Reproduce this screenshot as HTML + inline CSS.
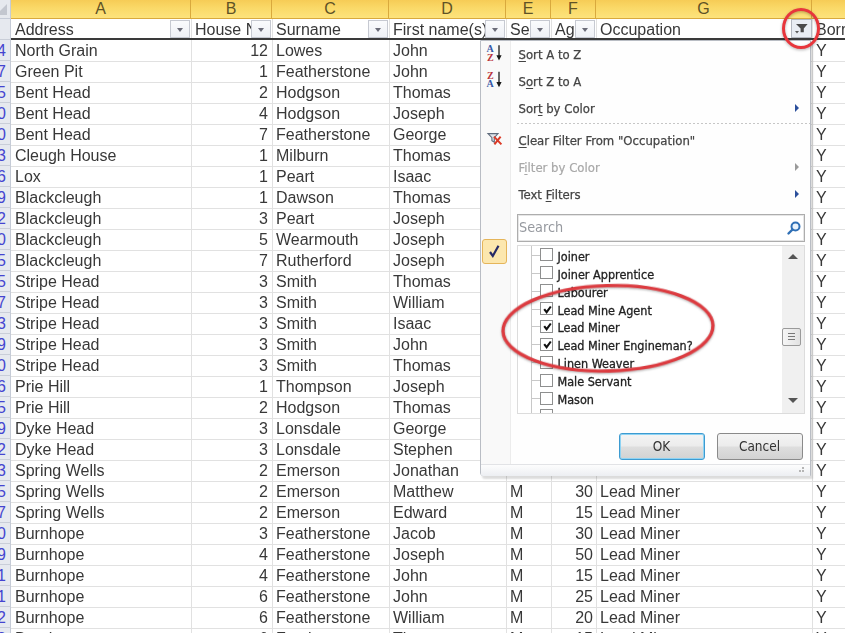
<!DOCTYPE html>
<html><head><meta charset="utf-8"><title>Filter</title>
<style>
html,body{margin:0;padding:0;}
body{width:845px;height:633px;overflow:hidden;position:relative;background:#fff;font-family:"Liberation Sans",sans-serif;font-size:16px;color:#383838;}
.abs{position:absolute;}
#sheet{position:absolute;left:0;top:0;width:845px;height:633px;overflow:hidden;filter:blur(0.45px);}
.colhdr{position:absolute;top:0;height:19px;box-sizing:border-box;border-right:1px solid #d9a93d;border-bottom:1px solid #d9a93d;background:linear-gradient(#f6cc56,#fad968 45%,#fde37c);text-align:center;line-height:17px;font-size:16px;color:#5f5226;}
.corner{position:absolute;left:0;top:0;width:11px;height:19px;box-sizing:border-box;background:#e6e9ee;border-right:1px solid #c5cbd6;border-bottom:1px solid #c5cbd6;overflow:hidden;}
.corner i{position:absolute;left:-4px;top:4px;width:0;height:0;border-left:11px solid transparent;border-bottom:11px solid #c3c7cf;}
.rowhdr{position:absolute;left:-29px;width:40px;height:21px;box-sizing:border-box;background:#e6e9ef;border-right:1px solid #c5cbd6;border-bottom:1px solid #c9ced8;text-align:right;padding-right:4px;line-height:22px;color:#4444d0;font-size:16px;}
.hl{position:absolute;left:11px;width:840px;height:1px;background:#e1e1e1;}
.vl{position:absolute;top:19px;width:1px;height:620px;background:#e1e1e1;}
.c{position:absolute;height:21px;line-height:22px;white-space:nowrap;overflow:hidden;}
.r{text-align:right;}
.fbtn{position:absolute;top:20px;width:20px;height:18px;box-sizing:border-box;border:1px solid #c6c9d1;background:linear-gradient(#fafbfd,#eef0f5);}
.fbtn i{position:absolute;left:5.5px;top:7px;width:0;height:0;border-left:3.5px solid transparent;border-right:3.5px solid transparent;border-top:4px solid #6b6c78;}
#hdrline{position:absolute;left:11px;top:38px;width:840px;height:2px;background:#3a3a3a;}
#menu{filter:blur(0.4px);position:absolute;left:479.5px;top:40px;width:331.5px;border-left-width:1.5px !important;height:436px;box-sizing:border-box;background:#fefefe;border:1px solid #b9bdc4;border-radius:0 0 0 3px;box-shadow:2px 3px 2px rgba(0,0,0,.14);font-family:"DejaVu Sans Condensed","DejaVu Sans","Liberation Sans",sans-serif;font-size:13px;color:#444;}
#gutter{position:absolute;left:0;top:0;width:29px;height:424px;background:#f9f9f9;border-right:1px solid #ececec;}
.mi{position:absolute;left:38px;height:20px;line-height:20px;white-space:nowrap;-webkit-text-stroke:0.25px #444;}
.mi.dis{-webkit-text-stroke:0.2px #a8a8a8;}
.mi u{text-decoration:underline;text-underline-offset:2px;}
.dis{color:#a8a8a8;}
.arr{position:absolute;left:314px;width:0;height:0;border-top:4px solid transparent;border-bottom:4px solid transparent;border-left:4px solid #2b4f9b;}
.arr.d{border-left-color:#9a9a9a;}
.sep{position:absolute;left:36px;width:293px;height:1px;background:repeating-linear-gradient(90deg,#c6c6c6 0 2px,transparent 2px 4px);}
#search{position:absolute;left:36px;top:173px;width:288px;height:28px;box-sizing:border-box;border:1px solid #adadad;background:#fff;box-shadow:inset 0 0 0 1px #e6e6e6;}
#search span{position:absolute;left:1.5px;top:0.5px;font-size:14.3px;line-height:22px;color:#96999f;}
#chk{position:absolute;left:1.5px;top:198px;width:25px;height:25px;box-sizing:border-box;border:1px solid #e5b55a;border-radius:3px;background:#fce7ae;}
#list{position:absolute;left:36px;top:204px;width:288px;height:169px;box-sizing:border-box;border:1px solid #dcdcdc;background:#fff;overflow:hidden;}
.li{position:absolute;left:40px;height:18px;line-height:18px;white-space:nowrap;font-family:"DejaVu Sans Condensed","DejaVu Sans","Liberation Sans",sans-serif;font-size:12.5px;color:#222;-webkit-text-stroke:0.3px #222;}
.cb{position:absolute;left:22.5px;width:13px;height:13px;box-sizing:border-box;border:1px solid #8e8f8f;background:#fff;}
.tl{position:absolute;left:13px;width:10px;height:0;border-top:1px solid #c8c8c8;}
#tv{position:absolute;left:13px;top:0;width:0;height:169px;border-left:1px solid #c8c8c8;}
#sb{position:absolute;left:264px;top:0;width:22px;height:167px;background:#f0f0f0;}
#thumb{position:absolute;left:0.5px;top:82px;width:19px;height:18px;box-sizing:border-box;border:1px solid #9a9a9a;border-radius:2px;background:linear-gradient(90deg,#f6f6f6,#e2e2e2);}
.btn{position:absolute;top:391.5px;width:86px;height:27px;box-sizing:border-box;border:1px solid #8a8a8a;border-radius:3px;background:linear-gradient(#f4f4f4,#ececec 48%,#dedede 52%,#d2d2d2);text-align:center;line-height:25px;font-size:13.5px;color:#333;}
#ok{left:138px;border-color:#3d9bd1;box-shadow:inset 0 0 0 1px #8fd3f3;}
#cancel{left:236px;}
#strip{position:absolute;left:0;top:423px;width:329px;height:11px;background:linear-gradient(#fdfdfd,#eceef2);border-top:1px solid #e2e3e6;border-radius:0 0 0 2px;}
#ring1{position:absolute;left:781.8px;top:7.6px;width:38.4px;height:41.1px;box-sizing:border-box;border:3.7px solid #e8363c;border-radius:50%;filter:drop-shadow(0 1.5px 1.5px rgba(0,0,0,.3));}
</style></head>
<body>
<div id="sheet">
<div class="hl" style="top:60.6px"></div>
<div class="hl" style="top:81.6px"></div>
<div class="hl" style="top:102.6px"></div>
<div class="hl" style="top:123.6px"></div>
<div class="hl" style="top:144.6px"></div>
<div class="hl" style="top:165.6px"></div>
<div class="hl" style="top:186.6px"></div>
<div class="hl" style="top:207.6px"></div>
<div class="hl" style="top:228.6px"></div>
<div class="hl" style="top:249.6px"></div>
<div class="hl" style="top:270.6px"></div>
<div class="hl" style="top:291.6px"></div>
<div class="hl" style="top:312.6px"></div>
<div class="hl" style="top:333.6px"></div>
<div class="hl" style="top:354.6px"></div>
<div class="hl" style="top:375.6px"></div>
<div class="hl" style="top:396.6px"></div>
<div class="hl" style="top:417.6px"></div>
<div class="hl" style="top:438.6px"></div>
<div class="hl" style="top:459.6px"></div>
<div class="hl" style="top:480.6px"></div>
<div class="hl" style="top:501.6px"></div>
<div class="hl" style="top:522.6px"></div>
<div class="hl" style="top:543.6px"></div>
<div class="hl" style="top:564.6px"></div>
<div class="hl" style="top:585.6px"></div>
<div class="hl" style="top:606.6px"></div>
<div class="hl" style="top:627.6px"></div>
<div class="hl" style="top:648.6px"></div>
<div class="vl" style="left:190.5px"></div>
<div class="vl" style="left:271.5px"></div>
<div class="vl" style="left:388.5px"></div>
<div class="vl" style="left:505.5px"></div>
<div class="vl" style="left:550.5px"></div>
<div class="vl" style="left:595.5px"></div>
<div class="vl" style="left:811.5px"></div>
<div class="corner"><i></i></div>
<div class="colhdr" style="left:11px;width:180px">A</div>
<div class="colhdr" style="left:191px;width:81px">B</div>
<div class="colhdr" style="left:272px;width:117px">C</div>
<div class="colhdr" style="left:389px;width:117px">D</div>
<div class="colhdr" style="left:506px;width:45px">E</div>
<div class="colhdr" style="left:551px;width:45px">F</div>
<div class="colhdr" style="left:596px;width:216px">G</div>
<div class="colhdr" style="left:812px;width:88px">H</div>
<div class="rowhdr" style="top:19px;height:21px"></div>
<div class="c" style="left:15px;top:19px;width:157px">Address</div>
<div class="fbtn" style="left:170px"><i></i></div>
<div class="c" style="left:195px;top:19px;width:58px">House No</div>
<div class="fbtn" style="left:251px"><i></i></div>
<div class="c" style="left:276px;top:19px;width:94px">Surname</div>
<div class="fbtn" style="left:368px"><i></i></div>
<div class="c" style="left:393px;top:19px;width:94px">First name(s)</div>
<div class="fbtn" style="left:485px"><i></i></div>
<div class="c" style="left:510px;top:19px;width:20px">Sex</div>
<div class="fbtn" style="left:530px"><i></i></div>
<div class="c" style="left:555px;top:19px;width:20px">Age</div>
<div class="fbtn" style="left:575px"><i></i></div>
<div class="c" style="left:600px;top:19px;width:193px">Occupation</div>
<div class="c" style="left:816px;top:19px;width:88px">Born in county</div>
<div id="hdrline"></div>
<div id="rows" style="position:absolute;left:0;top:0;transform:none">
<div class="rowhdr" style="top:40px">14</div>
<div class="c" style="left:15px;top:40px;width:170px">North Grain</div>
<div class="c r" style="left:191px;top:40px;width:77px">12</div>
<div class="c" style="left:276px;top:40px;width:112px">Lowes</div>
<div class="c" style="left:393px;top:40px;width:112px">John</div>
<div class="c" style="left:510px;top:40px;width:40px">M</div>
<div class="c r" style="left:551px;top:40px;width:42px">30</div>
<div class="c" style="left:600px;top:40px;width:200px">Lead Miner</div>
<div class="c" style="left:816px;top:40px;width:30px">Y</div>
<div class="rowhdr" style="top:61px">17</div>
<div class="c" style="left:15px;top:61px;width:170px">Green Pit</div>
<div class="c r" style="left:191px;top:61px;width:77px">1</div>
<div class="c" style="left:276px;top:61px;width:112px">Featherstone</div>
<div class="c" style="left:393px;top:61px;width:112px">John</div>
<div class="c" style="left:510px;top:61px;width:40px">M</div>
<div class="c r" style="left:551px;top:61px;width:42px">30</div>
<div class="c" style="left:600px;top:61px;width:200px">Lead Miner</div>
<div class="c" style="left:816px;top:61px;width:30px">Y</div>
<div class="rowhdr" style="top:82px">25</div>
<div class="c" style="left:15px;top:82px;width:170px">Bent Head</div>
<div class="c r" style="left:191px;top:82px;width:77px">2</div>
<div class="c" style="left:276px;top:82px;width:112px">Hodgson</div>
<div class="c" style="left:393px;top:82px;width:112px">Thomas</div>
<div class="c" style="left:510px;top:82px;width:40px">M</div>
<div class="c r" style="left:551px;top:82px;width:42px">30</div>
<div class="c" style="left:600px;top:82px;width:200px">Lead Miner</div>
<div class="c" style="left:816px;top:82px;width:30px">Y</div>
<div class="rowhdr" style="top:103px">30</div>
<div class="c" style="left:15px;top:103px;width:170px">Bent Head</div>
<div class="c r" style="left:191px;top:103px;width:77px">4</div>
<div class="c" style="left:276px;top:103px;width:112px">Hodgson</div>
<div class="c" style="left:393px;top:103px;width:112px">Joseph</div>
<div class="c" style="left:510px;top:103px;width:40px">M</div>
<div class="c r" style="left:551px;top:103px;width:42px">30</div>
<div class="c" style="left:600px;top:103px;width:200px">Lead Miner</div>
<div class="c" style="left:816px;top:103px;width:30px">Y</div>
<div class="rowhdr" style="top:124px">40</div>
<div class="c" style="left:15px;top:124px;width:170px">Bent Head</div>
<div class="c r" style="left:191px;top:124px;width:77px">7</div>
<div class="c" style="left:276px;top:124px;width:112px">Featherstone</div>
<div class="c" style="left:393px;top:124px;width:112px">George</div>
<div class="c" style="left:510px;top:124px;width:40px">M</div>
<div class="c r" style="left:551px;top:124px;width:42px">30</div>
<div class="c" style="left:600px;top:124px;width:200px">Lead Miner</div>
<div class="c" style="left:816px;top:124px;width:30px">Y</div>
<div class="rowhdr" style="top:145px">43</div>
<div class="c" style="left:15px;top:145px;width:170px">Cleugh House</div>
<div class="c r" style="left:191px;top:145px;width:77px">1</div>
<div class="c" style="left:276px;top:145px;width:112px">Milburn</div>
<div class="c" style="left:393px;top:145px;width:112px">Thomas</div>
<div class="c" style="left:510px;top:145px;width:40px">M</div>
<div class="c r" style="left:551px;top:145px;width:42px">30</div>
<div class="c" style="left:600px;top:145px;width:200px">Lead Miner</div>
<div class="c" style="left:816px;top:145px;width:30px">Y</div>
<div class="rowhdr" style="top:166px">46</div>
<div class="c" style="left:15px;top:166px;width:170px">Lox</div>
<div class="c r" style="left:191px;top:166px;width:77px">1</div>
<div class="c" style="left:276px;top:166px;width:112px">Peart</div>
<div class="c" style="left:393px;top:166px;width:112px">Isaac</div>
<div class="c" style="left:510px;top:166px;width:40px">M</div>
<div class="c r" style="left:551px;top:166px;width:42px">30</div>
<div class="c" style="left:600px;top:166px;width:200px">Lead Miner</div>
<div class="c" style="left:816px;top:166px;width:30px">Y</div>
<div class="rowhdr" style="top:187px">49</div>
<div class="c" style="left:15px;top:187px;width:170px">Blackcleugh</div>
<div class="c r" style="left:191px;top:187px;width:77px">1</div>
<div class="c" style="left:276px;top:187px;width:112px">Dawson</div>
<div class="c" style="left:393px;top:187px;width:112px">Thomas</div>
<div class="c" style="left:510px;top:187px;width:40px">M</div>
<div class="c r" style="left:551px;top:187px;width:42px">30</div>
<div class="c" style="left:600px;top:187px;width:200px">Lead Miner</div>
<div class="c" style="left:816px;top:187px;width:30px">Y</div>
<div class="rowhdr" style="top:208px">52</div>
<div class="c" style="left:15px;top:208px;width:170px">Blackcleugh</div>
<div class="c r" style="left:191px;top:208px;width:77px">3</div>
<div class="c" style="left:276px;top:208px;width:112px">Peart</div>
<div class="c" style="left:393px;top:208px;width:112px">Joseph</div>
<div class="c" style="left:510px;top:208px;width:40px">M</div>
<div class="c r" style="left:551px;top:208px;width:42px">30</div>
<div class="c" style="left:600px;top:208px;width:200px">Lead Miner</div>
<div class="c" style="left:816px;top:208px;width:30px">Y</div>
<div class="rowhdr" style="top:229px">60</div>
<div class="c" style="left:15px;top:229px;width:170px">Blackcleugh</div>
<div class="c r" style="left:191px;top:229px;width:77px">5</div>
<div class="c" style="left:276px;top:229px;width:112px">Wearmouth</div>
<div class="c" style="left:393px;top:229px;width:112px">Joseph</div>
<div class="c" style="left:510px;top:229px;width:40px">M</div>
<div class="c r" style="left:551px;top:229px;width:42px">30</div>
<div class="c" style="left:600px;top:229px;width:200px">Lead Miner</div>
<div class="c" style="left:816px;top:229px;width:30px">Y</div>
<div class="rowhdr" style="top:250px">65</div>
<div class="c" style="left:15px;top:250px;width:170px">Blackcleugh</div>
<div class="c r" style="left:191px;top:250px;width:77px">7</div>
<div class="c" style="left:276px;top:250px;width:112px">Rutherford</div>
<div class="c" style="left:393px;top:250px;width:112px">Joseph</div>
<div class="c" style="left:510px;top:250px;width:40px">M</div>
<div class="c r" style="left:551px;top:250px;width:42px">30</div>
<div class="c" style="left:600px;top:250px;width:200px">Lead Miner</div>
<div class="c" style="left:816px;top:250px;width:30px">Y</div>
<div class="rowhdr" style="top:271px">75</div>
<div class="c" style="left:15px;top:271px;width:170px">Stripe Head</div>
<div class="c r" style="left:191px;top:271px;width:77px">3</div>
<div class="c" style="left:276px;top:271px;width:112px">Smith</div>
<div class="c" style="left:393px;top:271px;width:112px">Thomas</div>
<div class="c" style="left:510px;top:271px;width:40px">M</div>
<div class="c r" style="left:551px;top:271px;width:42px">30</div>
<div class="c" style="left:600px;top:271px;width:200px">Lead Miner</div>
<div class="c" style="left:816px;top:271px;width:30px">Y</div>
<div class="rowhdr" style="top:292px">77</div>
<div class="c" style="left:15px;top:292px;width:170px">Stripe Head</div>
<div class="c r" style="left:191px;top:292px;width:77px">3</div>
<div class="c" style="left:276px;top:292px;width:112px">Smith</div>
<div class="c" style="left:393px;top:292px;width:112px">William</div>
<div class="c" style="left:510px;top:292px;width:40px">M</div>
<div class="c r" style="left:551px;top:292px;width:42px">30</div>
<div class="c" style="left:600px;top:292px;width:200px">Lead Miner</div>
<div class="c" style="left:816px;top:292px;width:30px">Y</div>
<div class="rowhdr" style="top:313px">83</div>
<div class="c" style="left:15px;top:313px;width:170px">Stripe Head</div>
<div class="c r" style="left:191px;top:313px;width:77px">3</div>
<div class="c" style="left:276px;top:313px;width:112px">Smith</div>
<div class="c" style="left:393px;top:313px;width:112px">Isaac</div>
<div class="c" style="left:510px;top:313px;width:40px">M</div>
<div class="c r" style="left:551px;top:313px;width:42px">30</div>
<div class="c" style="left:600px;top:313px;width:200px">Lead Miner</div>
<div class="c" style="left:816px;top:313px;width:30px">Y</div>
<div class="rowhdr" style="top:334px">89</div>
<div class="c" style="left:15px;top:334px;width:170px">Stripe Head</div>
<div class="c r" style="left:191px;top:334px;width:77px">3</div>
<div class="c" style="left:276px;top:334px;width:112px">Smith</div>
<div class="c" style="left:393px;top:334px;width:112px">John</div>
<div class="c" style="left:510px;top:334px;width:40px">M</div>
<div class="c r" style="left:551px;top:334px;width:42px">30</div>
<div class="c" style="left:600px;top:334px;width:200px">Lead Miner</div>
<div class="c" style="left:816px;top:334px;width:30px">Y</div>
<div class="rowhdr" style="top:355px">90</div>
<div class="c" style="left:15px;top:355px;width:170px">Stripe Head</div>
<div class="c r" style="left:191px;top:355px;width:77px">3</div>
<div class="c" style="left:276px;top:355px;width:112px">Smith</div>
<div class="c" style="left:393px;top:355px;width:112px">Thomas</div>
<div class="c" style="left:510px;top:355px;width:40px">M</div>
<div class="c r" style="left:551px;top:355px;width:42px">30</div>
<div class="c" style="left:600px;top:355px;width:200px">Lead Miner</div>
<div class="c" style="left:816px;top:355px;width:30px">Y</div>
<div class="rowhdr" style="top:376px">96</div>
<div class="c" style="left:15px;top:376px;width:170px">Prie Hill</div>
<div class="c r" style="left:191px;top:376px;width:77px">1</div>
<div class="c" style="left:276px;top:376px;width:112px">Thompson</div>
<div class="c" style="left:393px;top:376px;width:112px">Joseph</div>
<div class="c" style="left:510px;top:376px;width:40px">M</div>
<div class="c r" style="left:551px;top:376px;width:42px">30</div>
<div class="c" style="left:600px;top:376px;width:200px">Lead Miner</div>
<div class="c" style="left:816px;top:376px;width:30px">Y</div>
<div class="rowhdr" style="top:397px">105</div>
<div class="c" style="left:15px;top:397px;width:170px">Prie Hill</div>
<div class="c r" style="left:191px;top:397px;width:77px">2</div>
<div class="c" style="left:276px;top:397px;width:112px">Hodgson</div>
<div class="c" style="left:393px;top:397px;width:112px">Thomas</div>
<div class="c" style="left:510px;top:397px;width:40px">M</div>
<div class="c r" style="left:551px;top:397px;width:42px">30</div>
<div class="c" style="left:600px;top:397px;width:200px">Lead Miner</div>
<div class="c" style="left:816px;top:397px;width:30px">Y</div>
<div class="rowhdr" style="top:418px">109</div>
<div class="c" style="left:15px;top:418px;width:170px">Dyke Head</div>
<div class="c r" style="left:191px;top:418px;width:77px">3</div>
<div class="c" style="left:276px;top:418px;width:112px">Lonsdale</div>
<div class="c" style="left:393px;top:418px;width:112px">George</div>
<div class="c" style="left:510px;top:418px;width:40px">M</div>
<div class="c r" style="left:551px;top:418px;width:42px">30</div>
<div class="c" style="left:600px;top:418px;width:200px">Lead Miner</div>
<div class="c" style="left:816px;top:418px;width:30px">Y</div>
<div class="rowhdr" style="top:439px">112</div>
<div class="c" style="left:15px;top:439px;width:170px">Dyke Head</div>
<div class="c r" style="left:191px;top:439px;width:77px">3</div>
<div class="c" style="left:276px;top:439px;width:112px">Lonsdale</div>
<div class="c" style="left:393px;top:439px;width:112px">Stephen</div>
<div class="c" style="left:510px;top:439px;width:40px">M</div>
<div class="c r" style="left:551px;top:439px;width:42px">30</div>
<div class="c" style="left:600px;top:439px;width:200px">Lead Miner</div>
<div class="c" style="left:816px;top:439px;width:30px">Y</div>
<div class="rowhdr" style="top:460px">113</div>
<div class="c" style="left:15px;top:460px;width:170px">Spring Wells</div>
<div class="c r" style="left:191px;top:460px;width:77px">2</div>
<div class="c" style="left:276px;top:460px;width:112px">Emerson</div>
<div class="c" style="left:393px;top:460px;width:112px">Jonathan</div>
<div class="c" style="left:510px;top:460px;width:40px">M</div>
<div class="c r" style="left:551px;top:460px;width:42px">30</div>
<div class="c" style="left:600px;top:460px;width:200px">Lead Miner</div>
<div class="c" style="left:816px;top:460px;width:30px">Y</div>
<div class="rowhdr" style="top:481px">115</div>
<div class="c" style="left:15px;top:481px;width:170px">Spring Wells</div>
<div class="c r" style="left:191px;top:481px;width:77px">2</div>
<div class="c" style="left:276px;top:481px;width:112px">Emerson</div>
<div class="c" style="left:393px;top:481px;width:112px">Matthew</div>
<div class="c" style="left:510px;top:481px;width:40px">M</div>
<div class="c r" style="left:551px;top:481px;width:42px">30</div>
<div class="c" style="left:600px;top:481px;width:200px">Lead Miner</div>
<div class="c" style="left:816px;top:481px;width:30px">Y</div>
<div class="rowhdr" style="top:502px">117</div>
<div class="c" style="left:15px;top:502px;width:170px">Spring Wells</div>
<div class="c r" style="left:191px;top:502px;width:77px">2</div>
<div class="c" style="left:276px;top:502px;width:112px">Emerson</div>
<div class="c" style="left:393px;top:502px;width:112px">Edward</div>
<div class="c" style="left:510px;top:502px;width:40px">M</div>
<div class="c r" style="left:551px;top:502px;width:42px">15</div>
<div class="c" style="left:600px;top:502px;width:200px">Lead Miner</div>
<div class="c" style="left:816px;top:502px;width:30px">Y</div>
<div class="rowhdr" style="top:523px">120</div>
<div class="c" style="left:15px;top:523px;width:170px">Burnhope</div>
<div class="c r" style="left:191px;top:523px;width:77px">3</div>
<div class="c" style="left:276px;top:523px;width:112px">Featherstone</div>
<div class="c" style="left:393px;top:523px;width:112px">Jacob</div>
<div class="c" style="left:510px;top:523px;width:40px">M</div>
<div class="c r" style="left:551px;top:523px;width:42px">30</div>
<div class="c" style="left:600px;top:523px;width:200px">Lead Miner</div>
<div class="c" style="left:816px;top:523px;width:30px">Y</div>
<div class="rowhdr" style="top:544px">129</div>
<div class="c" style="left:15px;top:544px;width:170px">Burnhope</div>
<div class="c r" style="left:191px;top:544px;width:77px">4</div>
<div class="c" style="left:276px;top:544px;width:112px">Featherstone</div>
<div class="c" style="left:393px;top:544px;width:112px">Joseph</div>
<div class="c" style="left:510px;top:544px;width:40px">M</div>
<div class="c r" style="left:551px;top:544px;width:42px">50</div>
<div class="c" style="left:600px;top:544px;width:200px">Lead Miner</div>
<div class="c" style="left:816px;top:544px;width:30px">Y</div>
<div class="rowhdr" style="top:565px">131</div>
<div class="c" style="left:15px;top:565px;width:170px">Burnhope</div>
<div class="c r" style="left:191px;top:565px;width:77px">4</div>
<div class="c" style="left:276px;top:565px;width:112px">Featherstone</div>
<div class="c" style="left:393px;top:565px;width:112px">John</div>
<div class="c" style="left:510px;top:565px;width:40px">M</div>
<div class="c r" style="left:551px;top:565px;width:42px">15</div>
<div class="c" style="left:600px;top:565px;width:200px">Lead Miner</div>
<div class="c" style="left:816px;top:565px;width:30px">Y</div>
<div class="rowhdr" style="top:586px">141</div>
<div class="c" style="left:15px;top:586px;width:170px">Burnhope</div>
<div class="c r" style="left:191px;top:586px;width:77px">6</div>
<div class="c" style="left:276px;top:586px;width:112px">Featherstone</div>
<div class="c" style="left:393px;top:586px;width:112px">John</div>
<div class="c" style="left:510px;top:586px;width:40px">M</div>
<div class="c r" style="left:551px;top:586px;width:42px">25</div>
<div class="c" style="left:600px;top:586px;width:200px">Lead Miner</div>
<div class="c" style="left:816px;top:586px;width:30px">Y</div>
<div class="rowhdr" style="top:607px">142</div>
<div class="c" style="left:15px;top:607px;width:170px">Burnhope</div>
<div class="c r" style="left:191px;top:607px;width:77px">6</div>
<div class="c" style="left:276px;top:607px;width:112px">Featherstone</div>
<div class="c" style="left:393px;top:607px;width:112px">William</div>
<div class="c" style="left:510px;top:607px;width:40px">M</div>
<div class="c r" style="left:551px;top:607px;width:42px">20</div>
<div class="c" style="left:600px;top:607px;width:200px">Lead Miner</div>
<div class="c" style="left:816px;top:607px;width:30px">Y</div>
<div class="rowhdr" style="top:628px">143</div>
<div class="c" style="left:15px;top:628px;width:170px">Burnhope</div>
<div class="c r" style="left:191px;top:628px;width:77px">6</div>
<div class="c" style="left:276px;top:628px;width:112px">Featherstone</div>
<div class="c" style="left:393px;top:628px;width:112px">Thomas</div>
<div class="c" style="left:510px;top:628px;width:40px">M</div>
<div class="c r" style="left:551px;top:628px;width:42px">15</div>
<div class="c" style="left:600px;top:628px;width:200px">Lead Miner</div>
<div class="c" style="left:816px;top:628px;width:30px">Y</div>
</div>
</div>
<div id="menu">
<div id="gutter"></div>
<svg class="abs" style="left:0;top:0" width="30" height="110" viewBox="0 0 30 110"><g font-family="Liberation Serif,serif" font-weight="bold" font-size="10"><text x="5.6" y="11.3" fill="#3557a6">A</text><text x="6" y="19.6" fill="#b9343c">Z</text><text x="6" y="38" fill="#b9343c">Z</text><text x="5.6" y="46.4" fill="#3557a6">A</text></g><path d="M18 4.2v12M18 30.8v12" stroke="#1a1a1a" stroke-width="1.3" fill="none"/><path d="M15.4 14.2h5.2L18 19.4zM15.4 41h5.2L18 46.2z" fill="#1a1a1a"/><path d="M7 92.6h10L13.3 96.6v4.6l-2.4-1.6v-3z" fill="#dfe4ea" stroke="#5f6b7c" stroke-width="1.1"/><path d="M13 95.6l7.4 7.8M19.6 95.6l-6.2 7.8" stroke="#dc3a26" stroke-width="2" fill="none"/></svg>
<div class="mi " style="top:4px"><u>S</u>ort A to Z</div>
<div class="mi " style="top:31px">S<u>o</u>rt Z to A</div>
<div class="mi " style="top:58px">Sor<u>t</u> by Color</div>
<div class="arr" style="top:62.5px"></div>
<div class="sep" style="top:81.5px"></div>
<div class="mi " style="top:89.5px"><u>C</u>lear Filter From "Occupation"</div>
<div class="mi dis" style="top:117px">F<u>i</u>lter by Color</div>
<div class="arr d" style="top:121.5px"></div>
<div class="mi " style="top:144px">Text <u>F</u>ilters</div>
<div class="arr" style="top:148.5px"></div>
<div id="search"><span>Search</span><svg class="abs" style="left:268px;top:5px" width="16" height="16" viewBox="0 0 16 16"><circle cx="9.5" cy="6.5" r="4" fill="#eaf3fb" stroke="#2f6fb5" stroke-width="2"/><path d="M6.5 9.5L2.5 13.5" stroke="#2f6fb5" stroke-width="2.4" stroke-linecap="round"/></svg></div>
<div id="chk"><svg class="abs" style="left:4px;top:4px" width="16" height="16" viewBox="0 0 16 16"><path d="M3 8L5.8 12L11.5 1.8" stroke="#262a66" stroke-width="2.2" fill="none"/></svg></div>
<div id="list"><div id="tv"></div>
<div class="tl" style="top:8.8px"></div>
<div class="cb" style="top:2.3px"></div>
<div class="li" style="top:1.8px">Joiner</div>
<div class="tl" style="top:26.7px"></div>
<div class="cb" style="top:20.2px"></div>
<div class="li" style="top:19.7px">Joiner Apprentice</div>
<div class="tl" style="top:44.6px"></div>
<div class="cb" style="top:38.1px"></div>
<div class="li" style="top:37.6px">Labourer</div>
<div class="tl" style="top:62.5px"></div>
<div class="cb" style="top:56.0px"><svg class="abs" style="left:1.5px;top:1.5px" width="9" height="9" viewBox="0 0 9 9"><path d="M1.2 4.2L3.6 7.2L7.8 1.5" stroke="#111" stroke-width="2.1" fill="none"/></svg></div>
<div class="li" style="top:55.5px">Lead Mine Agent</div>
<div class="tl" style="top:80.4px"></div>
<div class="cb" style="top:73.9px"><svg class="abs" style="left:1.5px;top:1.5px" width="9" height="9" viewBox="0 0 9 9"><path d="M1.2 4.2L3.6 7.2L7.8 1.5" stroke="#111" stroke-width="2.1" fill="none"/></svg></div>
<div class="li" style="top:73.4px">Lead Miner</div>
<div class="tl" style="top:98.3px"></div>
<div class="cb" style="top:91.8px"><svg class="abs" style="left:1.5px;top:1.5px" width="9" height="9" viewBox="0 0 9 9"><path d="M1.2 4.2L3.6 7.2L7.8 1.5" stroke="#111" stroke-width="2.1" fill="none"/></svg></div>
<div class="li" style="top:91.3px">Lead Miner Engineman?</div>
<div class="tl" style="top:116.2px"></div>
<div class="cb" style="top:109.7px"></div>
<div class="li" style="top:109.2px">Linen Weaver</div>
<div class="tl" style="top:134.1px"></div>
<div class="cb" style="top:127.6px"></div>
<div class="li" style="top:127.1px">Male Servant</div>
<div class="tl" style="top:152.0px"></div>
<div class="cb" style="top:145.5px"></div>
<div class="li" style="top:145.0px">Mason</div>
<div class="tl" style="top:169.9px"></div>
<div class="cb" style="top:163.4px"></div>
<div class="li" style="top:164.9px">Miller</div>
<div id="sb"><div class="abs" style="left:6px;top:8px;width:0;height:0;border-left:5px solid transparent;border-right:5px solid transparent;border-bottom:5px solid #555"></div><div id="thumb"><div class="abs" style="left:5px;top:4px;width:7px;height:1px;background:#777;box-shadow:0 3px 0 #777,0 6px 0 #777"></div></div><div class="abs" style="left:6px;top:152px;width:0;height:0;border-left:5px solid transparent;border-right:5px solid transparent;border-top:5px solid #555"></div></div>
</div>
<div class="btn" id="ok">OK</div><div class="btn" id="cancel">Cancel</div>
<div id="strip"><div class="abs" style="left:321px;top:5px;width:2px;height:2px;background:#b5b5b5;box-shadow:-3px 0 0 #b5b5b5,0 -3px 0 #b5b5b5"></div></div>
</div>
<div class="fbtn" style="left:791px;width:21px;top:19px;height:19px;background:#e9edf3;border-color:#b4b8c0"><svg class="abs" style="left:2px;top:1.5px" width="14" height="13" viewBox="0 0 14 13"><path d="M2 2H13.6L9.8 6.5V10.2H6.6V6.5Z" fill="#4a4a4a"/><path d="M1 8.9h4L3 11.5z" fill="#5a5a5a"/></svg></div>
<div id="ring1"></div>
<svg class="abs" style="left:490px;top:270px" width="240" height="120" viewBox="0 0 240 120"><ellipse cx="118" cy="58.3" rx="105" ry="42.7" transform="rotate(-1.6 118 58.3)" fill="none" stroke="#dc3b40" stroke-width="3.3" style="filter:drop-shadow(0 1px 1px rgba(0,0,0,.3))"/></svg>
</body></html>
